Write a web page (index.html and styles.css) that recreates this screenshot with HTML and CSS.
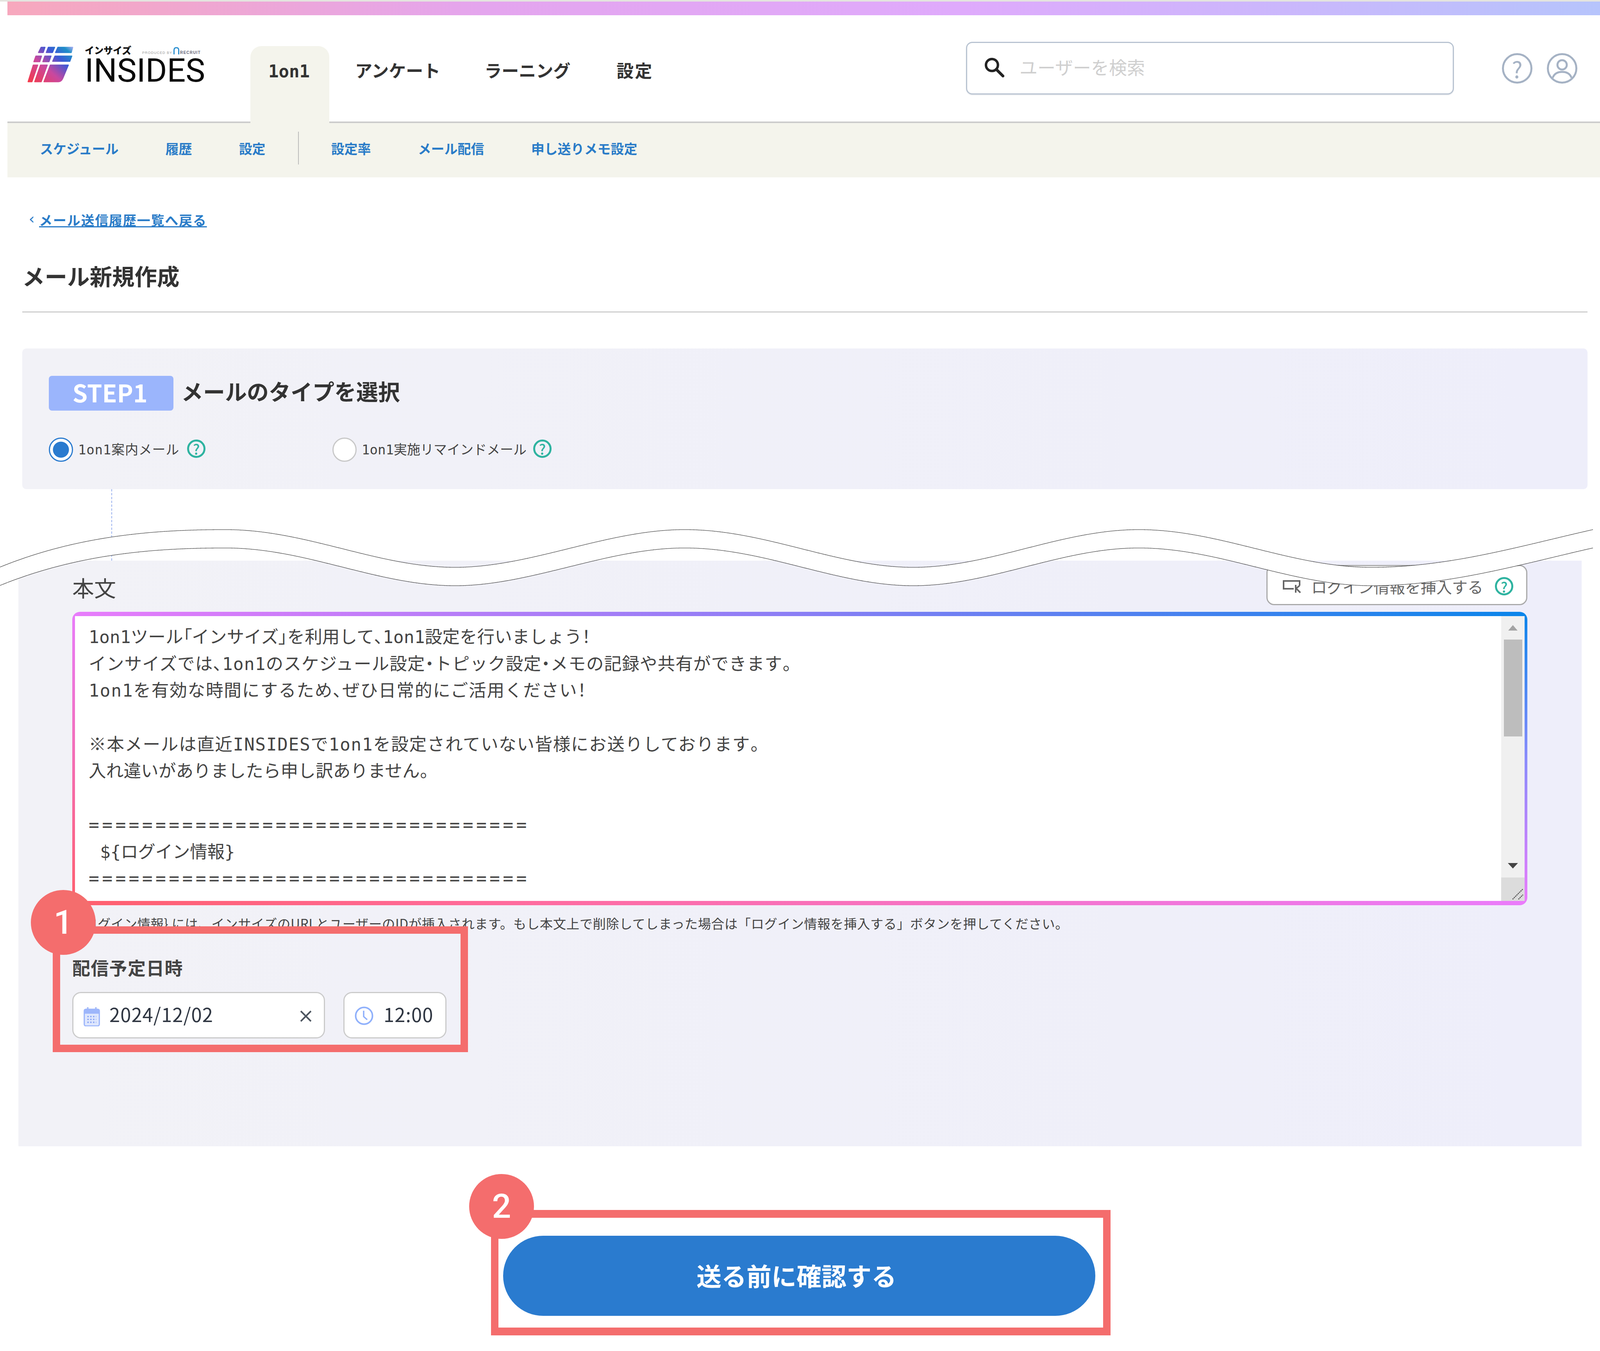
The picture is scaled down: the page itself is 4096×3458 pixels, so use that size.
FILE: index.html
```html
<!DOCTYPE html>
<html lang="ja">
<head>
<meta charset="utf-8">
<title>メール新規作成</title>
<link rel="stylesheet" href="styles.css">
</head>
<body>
<div class="page">
  <div class="topbar"></div>
  <header class="header">
    <div class="logo">
      <svg class="logo-mark" viewBox="175 140 330 303" preserveAspectRatio="none">
        <defs>
          <linearGradient id="lg" gradientUnits="userSpaceOnUse" x1="190" y1="440" x2="500" y2="145">
            <stop offset="0" stop-color="#f53a48"/>
            <stop offset="0.4" stop-color="#c9489f"/>
            <stop offset="0.68" stop-color="#3c58d6"/>
            <stop offset="0.88" stop-color="#1f8fc8"/>
            <stop offset="1" stop-color="#b5b0f5"/>
          </linearGradient>
        </defs>
        <g fill="url(#lg)" stroke="url(#lg)" stroke-width="8" stroke-linejoin="round">
          <path d="M276 150H302L290 193H258Z"/>
          <path d="M326 150H369L354 193H312Z"/>
          <path d="M392 150H494L484 193H376Z"/>
          <path d="M240 222H278L266 269H226Z"/>
          <path d="M302 222H344L330 269H288Z"/>
          <path d="M372 222H488L474 266H356Z"/>
          <path d="M222 296H252L212 434H186Z"/>
          <path d="M272 296H318L276 434H232Z"/>
          <path d="M340 296H464L426 405Q416 434 396 434H296Z"/>
        </g>
      </svg>
      <div class="logo-text">
        <div class="logo-top">
          <span class="logo-kana">インサイズ</span>
          <span class="logo-by">PRODUCED BY</span>
          <svg class="logo-arc" viewBox="0 0 20 26"><path d="M2 26V12Q2 3 10 3T18 12V26" fill="none" stroke="#2a8fd0" stroke-width="4"/></svg>
          <span class="logo-corp">RECRUIT</span>
        </div>
        <div class="logo-name">INSIDES</div>
      </div>
    </div>
    <nav class="tabs">
      <a class="tab tab-active">1on1</a>
      <a class="tab tab-a">アンケート</a>
      <a class="tab">ラーニング</a>
      <a class="tab tab-z">設定</a>
    </nav>
    <div class="search">
      <svg class="search-icon" viewBox="0 0 24 24"><circle cx="9.5" cy="9.5" r="6.8" fill="none" stroke="#222" stroke-width="2.8"/><path d="M14.5 14.5L22 22" stroke="#222" stroke-width="3.2" stroke-linecap="round"/></svg>
      <span class="search-ph">ユーザーを検索</span>
    </div>
    <span class="head-icon head-help">?</span>
    <svg class="head-user" viewBox="0 0 78 78"><circle cx="39" cy="39" r="36.5" fill="none" stroke="#a5b2c4" stroke-width="5"/><circle cx="39" cy="30" r="12" fill="none" stroke="#a5b2c4" stroke-width="5"/><path d="M15 63C19 52 28 48 39 48S59 52 63 63" fill="none" stroke="#a5b2c4" stroke-width="5"/></svg>
  </header>
  <div class="subnav">
    <a class="sub">スケジュール</a>
    <a class="sub">履歴</a>
    <a class="sub">設定</a>
    <span class="sub-div"></span>
    <a class="sub">設定率</a>
    <a class="sub">メール配信</a>
    <a class="sub">申し送りメモ設定</a>
  </div>
  <main class="main">
    <div class="back"><span class="back-chev">‹</span><a class="back-link">メール送信履歴一覧へ戻る</a></div>
    <h1 class="title">メール新規作成</h1>
    <section class="step">
      <div class="step-head">
        <span class="step-badge">STEP1</span>
        <h2 class="step-title">メールのタイプを選択</h2>
      </div>
      <div class="radios">
        <label class="radio-item"><span class="radio radio-on"></span><span class="radio-text">1on1案内メール</span><span class="q">?</span></label>
        <label class="radio-item"><span class="radio"></span><span class="radio-text">1on1実施リマインドメール</span><span class="q">?</span></label>
      </div>
    </section>
    <div class="connector"></div>
  </main>
  <section class="form">
    <div class="body-head">
      <span class="body-label">本文</span>
      <button class="insert">
        <svg class="insert-icon" viewBox="0 0 48 36"><path d="M29 24H3V4H44V16" fill="none" stroke="#666" stroke-width="4"/><path d="M34 14V34M34 24L44 16M36 24L46 34" fill="none" stroke="#666" stroke-width="4"/></svg>
        <span class="insert-text">ログイン情報を挿入する</span>
        <span class="q">?</span>
      </button>
    </div>
    <div class="editor">
      <div class="editor-inner">
        <div class="editor-text"><div class="ln">1on1ツール<span class="p">「</span>インサイズ<span class="p">」</span>を利用して<span class="p">、</span>1on1設定を行いましょう<span class="p">！</span></div><div class="ln ls-a">インサイズでは<span class="p">、</span>1on1のスケジュール設定<span class="p">・</span>トピック設定<span class="p">・</span>メモの記録や共有ができます<span class="p">。</span></div><div class="ln ls-b">1on1を有効な時間にするため<span class="p">、</span>ぜひ日常的にご活用ください<span class="p">！</span></div><div class="ln"></div><div class="ln ls-c">※本メールは直近INSIDESで1on1を設定されていない皆様にお送りしております<span class="p">。</span></div><div class="ln">入れ違いがありましたら申し訳ありません<span class="p">。</span></div><div class="ln"></div><div class="ln eq">=================================</div><div class="ln tag">${ログイン情報}</div><div class="ln eq">=================================</div></div>
        <div class="scrollbar">
          <span class="sb-cell"><span class="arrow-up"></span></span>
          <span class="sb-thumb"></span>
          <span class="sb-fill"></span>
          <span class="sb-cell"><span class="arrow-down"></span></span>
          <span class="sb-corner"><svg class="grip" viewBox="0 0 30 30"><path d="M3 28L28 3M17 28L28 17" stroke="#555" stroke-width="2.5" stroke-dasharray="3 1.5"/></svg></span>
        </div>
      </div>
    </div>
    <p class="note">${ログイン情報} には、インサイズのURLとユーザーのIDが挿入されます。もし本文上で削除してしまった場合は「ログイン情報を挿入する」ボタンを押してください。</p>
    <div class="sched">
      <div class="sched-label">配信予定日時</div>
      <div class="sched-row">
        <div class="field field-date">
          <svg class="cal" viewBox="0 0 40 48"><path d="M10 1V10M30 1V10" stroke="#a9bdf8" stroke-width="4"/><rect x="1.5" y="6" width="37" height="41" rx="4" fill="#dfe7fd" stroke="#9db6fb" stroke-width="3"/><rect x="1.5" y="6" width="37" height="11" fill="#9db6fb"/><path d="M9 24H31M9 31H31M9 38H31" stroke="#8aa6f5" stroke-width="3.5" stroke-dasharray="3.5 3.5"/></svg>
          <span class="field-val">2024/12/02</span>
          <svg class="clear" viewBox="0 0 32 32"><path d="M3 3L29 29M29 3L3 29" stroke="#4d5560" stroke-width="4"/></svg>
        </div>
        <div class="field field-time">
          <svg class="clock" viewBox="0 0 48 48"><circle cx="24" cy="24" r="21.5" fill="none" stroke="#8fb0fb" stroke-width="4"/><path d="M23 11V26L32 34" fill="none" stroke="#8fb0fb" stroke-width="3.5"/></svg>
          <span class="field-val">12:00</span>
        </div>
      </div>
      <div class="mark mark-1"><span class="mark-num mark-num-1">1</span></div>
    </div>
  </section>
  <div class="cta">
    <button class="submit">送る前に確認する</button>
    <span class="mark-num-wrap"><span class="mark-num">2</span></span>
  </div>
  <svg class="wave" viewBox="0 500 1568 100" preserveAspectRatio="none">
    <path class="wave-fill" d="M-10 560C70 525 150 519 221 519C300 519 370 556 446 556C520 556 595 519 671 519C750 519 820 556 895 556C970 556 1040 519 1116 519C1195 519 1265 556 1344 556C1420 556 1490 535 1561 519V537C1490 553 1420 574 1344 574C1265 574 1195 537 1116 537C1040 537 970 574 895 574C820 574 750 537 671 537C595 537 520 574 446 574C370 574 300 537 221 537C150 537 70 543 -10 578Z"/>
    <path class="wave-line" d="M-10 560C70 525 150 519 221 519C300 519 370 556 446 556C520 556 595 519 671 519C750 519 820 556 895 556C970 556 1040 519 1116 519C1195 519 1265 556 1344 556C1420 556 1490 535 1561 519"/>
    <path class="wave-line" d="M-10 578C70 543 150 537 221 537C300 537 370 574 446 574C520 574 595 537 671 537C750 537 820 574 895 574C970 574 1040 537 1116 537C1195 537 1265 574 1344 574C1420 574 1490 553 1561 537"/>
  </svg>
</div>
</body>
</html>
```
FILE: styles.css
```css
* { box-sizing: border-box; }
html, body { margin: 0; padding: 0; background: #fff; }
body { width: 4096px; height: 3458px; overflow: hidden; font-family: "DejaVu Sans Mono", "Noto Sans CJK JP", sans-serif; color: #333; }
.page { position: relative; width: 4096px; height: 3458px; padding-top: 4px; background: linear-gradient(#e4e4df 4px, #fff 4px); }
.topbar { height: 35px; margin-left: 19px; background: linear-gradient(90deg, #f7a8bd 0%, #e4a5ee 30%, #dfaafc 60%, #b6c4fc 100%); }

.header { display: flex; align-items: flex-start; height: 276px; margin-left: 19px; border-bottom: 4px solid #ccc; }
.logo { display: flex; width: 622px; padding: 79px 0 0 49px; gap: 27px; }
.logo-mark { width: 122px; height: 94px; flex: none; }
.logo-text { display: flex; flex-direction: column; }
.logo-top { display: flex; align-items: flex-end; height: 22px; }
.logo-kana { font-family: "Noto Sans CJK JP", sans-serif; font-size: 24px; line-height: 24px; font-weight: 900; color: #111; width: 147px; white-space: nowrap; }
.logo-by { font-family: "Liberation Sans", sans-serif; font-size: 9px; line-height: 10px; color: #999; white-space: nowrap; width: 84px; letter-spacing: 1px; }
.logo-corp { font-family: "Liberation Sans", sans-serif; font-size: 10px; line-height: 10px; font-weight: 700; color: #667; white-space: nowrap; letter-spacing: 1.2px; }
.logo-arc { width: 15px; height: 21px; margin: 0 2px 0 -4px; flex: none; }
.logo-name { font-family: "Roboto", sans-serif; font-size: 84px; line-height: 61px; letter-spacing: 0; color: #0a0a0a; font-weight: 400; margin-top: 10px; }

.tabs { display: flex; align-items: stretch; height: 197px; margin-top: 79px; gap: 113px; }
.tab { display: block; font-size: 44px; font-weight: 700; line-height: 60px; padding-top: 35px; color: #333; white-space: nowrap; }
.tab-active { width: 202px; height: 197px; padding-right: 4px; text-align: center; background: #f4f4ec; border-radius: 28px 28px 0 0; }
.tab-a { margin-left: -47px; }
.tab-z { margin-left: 5px; letter-spacing: 3px; }

.search { display: flex; align-items: center; width: 1249px; height: 135px; margin: 68px 123px 0 auto; padding: 0 0 0 42px; background: #fff; border: 3px solid #b8c3d1; border-radius: 16px; box-shadow: 0 2px 2px rgba(120,130,150,.15); }
.search-icon { width: 54px; height: 54px; flex: none; margin-top: -6px; }
.search-ph { margin-left: 38px; font-size: 46px; color: #cfcfcf; margin-top: -10px; white-space: nowrap; font-family: "Noto Sans CJK JP", sans-serif; }
.head-icon { display: flex; align-items: center; justify-content: center; flex: none; }
.head-help { width: 78px; height: 78px; margin-top: 97px; border: 5px solid #a5b2c4; border-radius: 50%; color: #a5b2c4; font-size: 58px; font-family: "Noto Sans CJK JP", sans-serif; }
.head-user { width: 78px; height: 78px; margin: 97px 58px 0 37px; flex: none; }

.subnav { display: flex; align-items: center; height: 139px; margin-left: 19px; padding: 0 0 11px 83px; gap: 120px; background: #f4f4ec; }
.sub { font-size: 34px; font-weight: 700; color: #2a7cc8; white-space: nowrap; }
.sub-div { width: 2px; height: 84px; background: #bbb; margin: 0 -37px 0 -37px; }

.main { padding: 0 32px 0 57px; }
.back { display: flex; align-items: center; height: 50px; margin: 83px 0 0 13px; font-size: 34px; font-weight: 700; color: #2a7cc8; white-space: nowrap; }
.back-chev { width: 30px; font-size: 38px; font-weight: 400; margin-top: -4px; }
.back-link { text-decoration: underline; letter-spacing: 1.8px; }
.title { height: 213px; margin: 0; padding-top: 84px; font-size: 57.5px; line-height: 80px; font-weight: 700; color: #333; border-bottom: 3px solid #cfcfcf; white-space: nowrap; }
.step { height: 360px; margin-top: 92px; padding: 70px 0 0 68px; background: linear-gradient(90deg, #f2f2f7, #eeeefa); border-radius: 10px; }
.step-head { display: flex; align-items: center; gap: 22px; }
.step-badge { display: flex; align-items: center; justify-content: center; width: 319px; height: 89px; padding: 0 6px 7px 0; background: #9bb5fc; border-radius: 8px; color: #fff; font-size: 62px; font-weight: 700; font-family: "Noto Sans CJK JP", sans-serif; }
.step-title { margin: -4px 0 0 -2px; font-size: 56px; line-height: 80px; font-weight: 700; color: #333; white-space: nowrap; }
.radios { display: flex; margin-top: 67px; }
.radio-item { display: flex; align-items: center; width: 726px; height: 66px; }
.radio { flex: none; display: block; width: 62px; height: 62px; border-radius: 50%; background: #fff; border: 3px solid #c8c8c8; }
.radio-on { border-color: #2a7bcf; background: radial-gradient(circle, #2a7bcf 0 20px, #fff 21px); }
.radio-text { margin: -6px 0 0 13px; font-size: 34px; color: #444; white-space: nowrap; }
.radio-item:first-child .radio-text { letter-spacing: .8px; }
.q { display: flex; align-items: center; justify-content: center; flex: none; width: 47px; height: 47px; margin-left: 20px; border: 5px solid #2eb3a0; border-radius: 50%; color: #2eb3a0; font-size: 36px; font-weight: 500; line-height: 1; font-family: "Noto Sans CJK JP", sans-serif; }
.radio-item .q { margin-top: -6px; }
.radio-item + .radio-item .q { margin-left: 17px; }
.connector { width: 0; height: 183px; margin-left: 228px; border-left: 2px dashed #9db3ef; }

.form { margin: 0 47px; height: 1499px; padding: 11px 139px 0 138px; background: linear-gradient(90deg, #f2f2f7, #eeeefa); }
.body-head { display: flex; justify-content: space-between; align-items: flex-start; height: 120px; }
.body-label { font-size: 56px; line-height: 80px; margin-top: 17px; color: #444; font-family: "Noto Sans CJK JP", sans-serif; font-weight: 400; }
.insert { display: flex; align-items: center; width: 668px; height: 103px; padding: 6px 0 0 38px; background: #fff; border: 3px solid #aaa; border-radius: 20px; font: inherit; color: #666; }
.insert-icon { width: 48px; height: 36px; flex: none; }
.insert-text { margin-left: 26px; font-size: 40px; white-space: nowrap; font-family: "Noto Sans CJK JP", sans-serif; }
.insert .q { margin-left: 30px; }

.editor { height: 751px; padding: 11px 7px; border-radius: 20px; overflow: hidden; background:
  linear-gradient(90deg, #e87cfb, #8a7ef5 50%, #0a85ea) top / 100% 11px no-repeat,
  linear-gradient(180deg, #0a85ea, #8a8cfb 50%, #ea7cfb) right / 7px 100% no-repeat,
  linear-gradient(90deg, #ff5f6d, #ff6b9d 30%, #ea7cfb) bottom / 100% 11px no-repeat,
  linear-gradient(180deg, #e87cfb, #ff5f6d) left / 7px 100% no-repeat; }
.editor-inner { display: flex; height: 729px; background: #fff; }
.editor-text { flex: 1; padding: 20px 0 0 35px; font-size: 44.7px; line-height: 68.7px; color: #444; white-space: pre; }
.ln { height: 68.7px; }
.p { font-feature-settings: "palt"; }
.ls-a { letter-spacing: 1px; }
.ls-b { letter-spacing: 1.7px; }
.ls-c { letter-spacing: 1.5px; }
.eq { letter-spacing: 7.3px; }
.tag { margin-left: 29px; letter-spacing: -.4px; }
.scrollbar { display: flex; flex-direction: column; align-items: center; width: 60px; background: #f0f0f0; }
.sb-cell { display: flex; align-items: center; justify-content: center; flex: none; width: 100%; height: 60px; }
.arrow-up { width: 0; height: 0; border: 12px solid transparent; border-top: 0; border-bottom: 14px solid #a3a3a3; }
.arrow-down { width: 0; height: 0; border: 13px solid transparent; border-bottom: 0; border-top: 14px solid #444; }
.sb-thumb { flex: none; width: 47px; height: 248px; background: #bdbdbd; }
.sb-fill { flex: 1; }
.sb-corner { position: relative; flex: none; width: 100%; height: 60px; background: #dcdcdc; }
.grip { position: absolute; right: 2px; bottom: 2px; width: 32px; height: 32px; }

.note { height: 48px; margin: 22px 0 0; font-size: 33.4px; line-height: 48px; letter-spacing: .55px; color: #444; white-space: nowrap; font-family: "Noto Sans CJK JP", sans-serif; }
.sched { position: relative; margin-top: 62px; }
.sched-label { font-size: 46px; line-height: 60px; font-weight: 700; color: #444; font-family: "Noto Sans CJK JP", sans-serif; white-space: nowrap; letter-spacing: 1.3px; margin-top: -4px; }
.sched-row { display: flex; gap: 47px; margin-top: 34px; }
.field { display: flex; align-items: center; height: 119px; background: #fff; border: 3px solid #cbcbcb; border-radius: 22px; }
.field-date { width: 647px; padding: 0 30px 0 26px; }
.field-time { width: 264px; padding-left: 26px; }
.cal { width: 42px; height: 50px; flex: none; margin-top: 6px; }
.field-val { font-family: "Noto Sans CJK JP", sans-serif; font-size: 49px; color: #2f3642; letter-spacing: 1px; margin-top: -9px; white-space: nowrap; }
.field-date .field-val { margin-left: 24px; }
.field-time .field-val { margin-left: 26px; }
.clear { width: 32px; height: 32px; margin-left: auto; flex: none; margin-top: 4px; }
.clock { width: 48px; height: 48px; flex: none; margin-top: 2px; }
.mark { position: absolute; left: -50px; top: -74px; width: 1063px; height: 322px; border: 19px solid #f46d6d; pointer-events: none; }
.mark-num { position: absolute; display: flex; align-items: center; justify-content: center; width: 166px; height: 166px; border-radius: 50%; background: #f46d6d; color: #fff; font-family: "Roboto", sans-serif; font-size: 86px; font-weight: 500; line-height: 1; }
.mark-num-1 { left: -75px; top: -112px; }

.cta { position: relative; width: 1586px; height: 321px; margin: 163px 0 0 1257px; padding: 46px 0 0 12px; border: 20px solid #f46d6d; border-width: 20px 19px; }
.submit { display: block; width: 1516px; height: 205px; padding: 0 14px 6px 0; border: 0; border-radius: 103px; background: #2a7bcf; color: #fff; font-family: "Noto Sans CJK JP", sans-serif; font-size: 64px; font-weight: 700; }
.mark-num-wrap { position: absolute; left: -75px; top: -112px; }

.wave { position: absolute; left: 0; top: 1306px; width: 4096px; height: 261px; overflow: hidden; }
.wave-fill { fill: #fff; }
.wave-line { fill: none; stroke: #000; stroke-width: .5; stroke-dasharray: .8 .35; }
```
